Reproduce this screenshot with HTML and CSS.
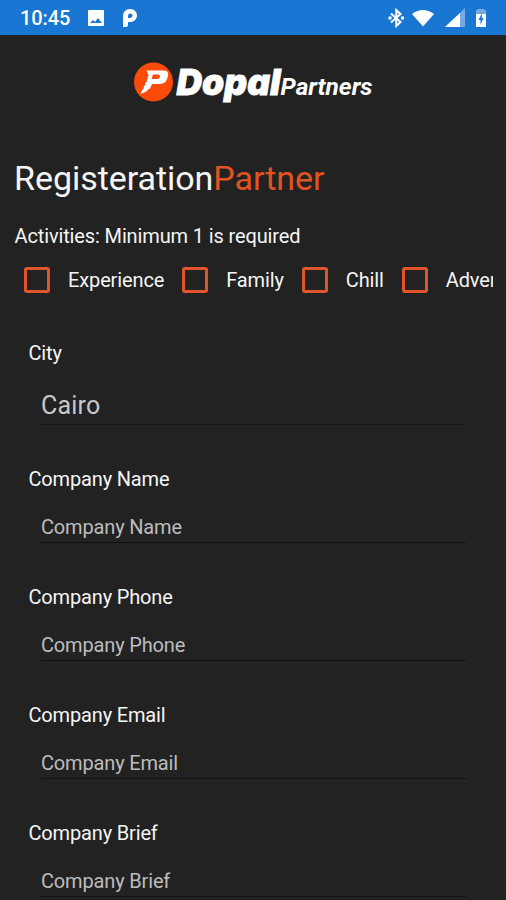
FILE: index.html
```html
<!DOCTYPE html>
<html lang="en">
<head>
<meta charset="utf-8">
<title>Dopal Partners</title>
<link rel="stylesheet" href="styles.css">
</head>
<body>
<div class="status">
  <span class="time">10:45</span>
  <svg class="photo" width="18" height="18" viewBox="0 0 18 18"><path fill="#fff" fill-rule="evenodd" d="M2 1h14q1 0 1 1v14q0 1-1 1H2q-1 0-1-1V2q0-1 1-1zM3 14h12l-4-5-3 4-2-2z"/></svg>
  <svg class="app" width="16" height="20" viewBox="0 0 16 20"><path fill="#fff" fill-rule="evenodd" d="M1 8C1 4 4 1 8 1c4.500 0 7 3 7 6.500S12 14 8.500 14H6v3q0 2-2 2H1zM6 8v2h2q2.500-.2 2.500-2.500T8 5.500Q6 5.500 6 8z"/></svg>
  <div class="system">
    <svg width="17" height="20" viewBox="0 0 17 20"><path fill="none" stroke="#fff" stroke-width="2" d="M3 5.500l9.500 8.500-4.200 4V2l4.200 4L3 14.500"/><path fill="#fff" d="M.5 8.500h3v3h-3zM13 8.500h3v3h-3z"/></svg>
    <svg width="24" height="20" viewBox="0 0 24 20"><path fill="#fff" d="M1 6Q12-2 23 6L12 18.500z"/></svg>
    <svg width="22" height="20" viewBox="0 0 22 20"><path fill="#75abe2" d="M21 0v19H1z"/><path fill="#fff" d="M16 5v14H1z"/></svg>
    <svg width="12" height="20" viewBox="0 0 12 20"><path fill="#75abe2" d="M3 1h6v1h2v5H1V2h2z"/><path fill="#fff" d="M1 6h10v13H1z"/><path fill="#1976d2" d="M7 5L3.500 12h2v5L8.500 10H6.700z"/></svg>
  </div>
</div>
<header class="brand">
  <svg width="246" height="54" viewBox="0 0 246 54">
    <circle cx="23.500" cy="24" r="19.500" fill="#fb4b0b"/>
    <path fill="#fff" fill-rule="evenodd" d="M16.500 12.500h17q5.500 0 4.500 5-1 8.500-8.500 8.500H22l-2 4.500-2 1-1.500 2-6 2.500 2-4.500 1-.5.5-3 1-.5.5-3 1-.5 2-7zM23 16.500l-1.500 4.500h5.500q2.500 0 3-2.500.3-2-2-2z"/>
    <text class="logo-main" x="46.500" y="37" textLength="104" lengthAdjust="spacingAndGlyphs">Dopal</text>
    <text class="logo-sub" x="150.500" y="37" textLength="92" lengthAdjust="spacingAndGlyphs">Partners</text>
  </svg>
</header>
<main>
  <h1>Registeration<span>Partner</span></h1>
  <p class="hint">Activities: Minimum 1 is required</p>
  <div class="activities">
    <label><i class="box"></i>Experience</label>
    <label><i class="box"></i>Family</label>
    <label><i class="box"></i>Chill</label>
    <label><i class="box"></i>Adventure</label>
  </div>
  <form>
    <div class="field city"><span class="label">City</span><div class="value">Cairo</div></div>
    <div class="field"><span class="label">Company Name</span><div class="value">Company Name</div></div>
    <div class="field"><span class="label">Company Phone</span><div class="value">Company Phone</div></div>
    <div class="field"><span class="label">Company Email</span><div class="value">Company Email</div></div>
    <div class="field"><span class="label">Company Brief</span><div class="value">Company Brief</div></div>
  </form>
</main>
</body>
</html>
```
FILE: styles.css
```css
* { box-sizing: border-box; }
body {
  margin: 0;
  height: 900px;
  overflow: hidden;
  background: #222;
  color: #f5f5f5;
  font-family: Roboto, sans-serif;
  font-size: 20px;
  letter-spacing: -.16px;
}
.status {
  display: flex;
  align-items: center;
  height: 35px;
  padding: 0 19px 0 20px;
  background: #1976d2;
  color: #fff;
}
.time { width: 67px; font-weight: 500; letter-spacing: -.1px; }
.photo { margin-right: 17px; }
.app { margin-top: 1px; }
.system { display: flex; gap: 9px; margin-left: auto; }
.system svg:nth-child(2) { margin-left: -3px; }
.brand { height: 95px; padding: 23px 0 0 130px; }
.brand svg { display: block; }
.logo-main {
  font: italic 900 36px Inter, sans-serif;
  letter-spacing: 0;
  fill: #fff;
  stroke: #fff;
  stroke-width: .8;
}
.logo-sub { font: italic 700 23px Roboto, sans-serif; letter-spacing: 0; fill: #fff; }
main { padding: 0 14px; }
h1 {
  margin: 24px 0 0;
  height: 48px;
  font-weight: 400;
  font-size: 34px;
  line-height: 48px;
  letter-spacing: -.05px;
  white-space: nowrap;
}
h1 span { color: #e2531f; }
.hint { margin: 22px 0 0; height: 24px; line-height: 24px; padding-left: .5px; letter-spacing: -.13px; }
.activities {
  display: flex;
  gap: 18px;
  width: 479px;
  height: 40px;
  margin-top: 12px;
  padding-left: 10px;
  overflow: hidden;
}
.activities label { display: flex; flex: none; align-items: center; letter-spacing: -.13px; }
.box {
  width: 26px;
  height: 26px;
  margin-right: 18px;
  border: 3px solid #e2552a;
  border-radius: 3px;
}
form { padding: 41px 14px 0; }
.field { height: 118px; }
.label { display: block; height: 24px; line-height: 24px; padding-left: .5px; }
.value {
  width: 425px;
  height: 41px;
  margin: 11px 0 0 13px;
  padding-top: 1px;
  border-bottom: 1px solid #101010;
  color: #bcbcbc;
  line-height: 48px;
}
.city { height: 126px; }
.city .value { height: 49px; font-size: 25px; line-height: 58px; letter-spacing: .2px; color: #c8c8c8; border-color: #171717; }
```
